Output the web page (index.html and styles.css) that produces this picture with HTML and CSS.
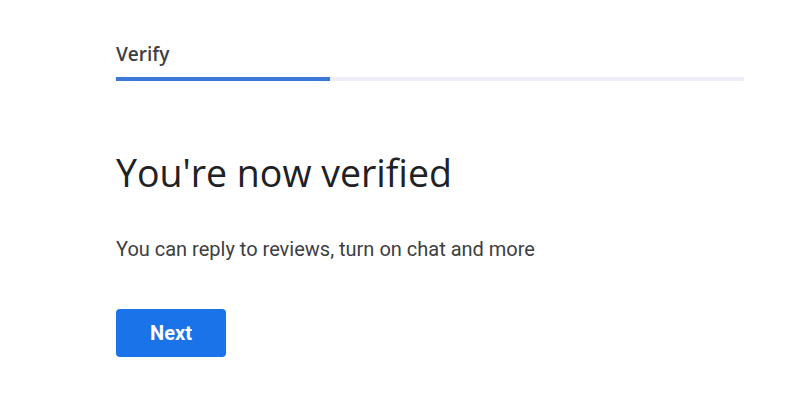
FILE: index.html
```html
<!DOCTYPE html>
<html>
<head>
<meta charset="utf-8">
<link rel="stylesheet" href="styles.css">
</head>
<body>
<main class="page">
  <header class="step">
    <div class="step-title">Verify</div>
    <div class="progress"><div class="progress-fill" style="width:34%"></div></div>
  </header>
  <h1 class="headline">You're now verified</h1>
  <p class="body">You can reply to reviews, turn on chat and more</p>
  <button class="btn-next">Next</button>
</main>
</body>
</html>
```
FILE: styles.css
```css
html, body {
  margin: 0;
  padding: 0;
  background: #ffffff;
}
.page {
  width: 628px;
  padding: 42px 0 0 116px;
  display: flex;
  flex-direction: column;
  align-items: flex-start;
}
.step {
  width: 100%;
  display: flex;
  flex-direction: column;
}
.step-title {
  font-family: "Open Sans", sans-serif;
  font-weight: 600;
  font-size: 19px;
  line-height: 24px;
  color: #3c4043;
  margin-bottom: 11px;
}
.progress {
  width: 100%;
  height: 4px;
  background: #eeeefb;
}
.progress-fill {
  height: 100%;
  background: #3c78d8;
}
.headline {
  font-family: "Open Sans", sans-serif;
  font-weight: 400;
  font-size: 37.5px;
  line-height: 44px;
  color: #202124;
  margin: 70px 0 0 0;
  letter-spacing: 0;
}
.body {
  font-family: Roboto, sans-serif;
  font-size: 20px;
  line-height: 24px;
  color: #3c4043;
  margin: 42px 0 0 0;
}
.btn-next {
  margin-top: 48px;
  width: 110px;
  height: 48px;
  border: none;
  border-radius: 4px;
  background: #1a73e8;
  color: #ffffff;
  font-family: Roboto, sans-serif;
  font-weight: 700;
  font-size: 20px;
  padding: 0;
}
```
